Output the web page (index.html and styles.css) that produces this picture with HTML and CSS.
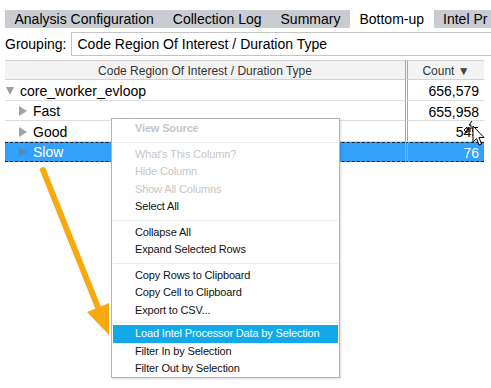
FILE: index.html
```html
<!DOCTYPE html>
<html lang="en">
<head>
    <meta charset="UTF-8">
    <title>Bottom-up</title>
    <link rel="stylesheet" href="styles.css">
</head>
<body>

    <div class="tabs">
        <div class="tab">Analysis Configuration</div>
        <div class="tab">Collection Log</div>
        <div class="tab">Summary</div>
        <div class="tab active">Bottom-up</div>
        <div class="tab">Intel Pr</div>
    </div>

    <div class="grouping">
        <span class="grouping-label">Grouping:</span>
        <div class="grouping-box">Code Region Of Interest / Duration Type</div>
    </div>

    <div class="grid">
        <div class="grid-row grid-header">
            <div class="cell cell-name">Code Region Of Interest / Duration Type</div>
            <div class="cell cell-count">Count <span class="sort">&#9660;</span></div>
        </div>
        <div class="grid-row">
            <div class="cell cell-name"><span class="tri tri-down"></span>core_worker_evloop</div>
            <div class="cell cell-count">656,579</div>
        </div>
        <div class="grid-row">
            <div class="cell cell-name level-1"><span class="tri tri-right"></span>Fast</div>
            <div class="cell cell-count">655,958</div>
        </div>
        <div class="grid-row">
            <div class="cell cell-name level-1"><span class="tri tri-right"></span>Good</div>
            <div class="cell cell-count">545</div>
        </div>
        <div class="grid-row selected">
            <div class="cell cell-name level-1"><span class="tri tri-right"></span>Slow</div>
            <div class="cell cell-count">76</div>
        </div>
    </div>

    <!-- context menu over the grid -->
    <div class="context-menu">
        <div class="menu-item disabled bold">View Source</div>
        <div class="menu-sep"></div>
        <div class="menu-item disabled">What's This Column?</div>
        <div class="menu-item disabled">Hide Column</div>
        <div class="menu-item disabled">Show All Columns</div>
        <div class="menu-item">Select All</div>
        <div class="menu-sep"></div>
        <div class="menu-item">Collapse All</div>
        <div class="menu-item">Expand Selected Rows</div>
        <div class="menu-sep"></div>
        <div class="menu-item">Copy Rows to Clipboard</div>
        <div class="menu-item">Copy Cell to Clipboard</div>
        <div class="menu-item">Export to CSV...</div>
        <div class="menu-sep tight"></div>
        <div class="menu-item highlighted">Load Intel Processor Data by Selection</div>
        <div class="menu-item">Filter In by Selection</div>
        <div class="menu-item">Filter Out by Selection</div>
    </div>

    <!-- annotation arrow -->
    <svg class="annotation" width="130" height="350" viewBox="0 0 130 350">
        <line x1="43" y1="170" x2="99" y2="310" stroke="#f7a90d" stroke-width="6" stroke-linecap="round"/>
        <polygon points="109,335 87,312 109,303" fill="#f7a90d"/>
    </svg>

    <!-- mouse pointer -->
    <svg class="pointer" width="24" height="34" viewBox="0 0 24 34">
        <path d="M8 1 L5 5 L7 5 L7 9 L3 9 L3 7 L0 10 L3 13 L3 11 L7 11" fill="none" stroke="#000" stroke-width="1"/>
        <path d="M11 9 L14 12 L11 15" fill="none" stroke="#000" stroke-width="1"/>
        <path d="M9 6 L9 22 L12.5 18.5 L15 25 L17.5 24 L15 17.5 L20 17.5 Z" fill="#fff" stroke="#000" stroke-width="1"/>
    </svg>

</body>
</html>
```

FILE: styles.css
```css
:root {
    --tab-grey: #c9cdd2;
    --line-grey: #d2d2d2;
    --row-line: #dedede;
    --select-blue: #33a0fc;
    --menu-blue: #12a9e8;
    --disabled: #c6c6c6;
}

* {
    margin: 0;
    padding: 0;
    box-sizing: border-box;
}

body {
    font-family: 'Liberation Sans', Arial, sans-serif;
    color: #000;
    background: #fff;
    width: 491px;
    height: 388px;
    overflow: hidden;
    position: relative;
}

/* Tabs */
.tabs {
    display: flex;
    margin: 10px 0 0 5px;
    height: 18px;
    white-space: nowrap;
}

.tab {
    padding: 0 9.5px;
    background-color: var(--tab-grey);
    font-size: 14px;
    line-height: 18px;
}

.tab:last-child {
    flex: 1;
}

.tab.active {
    background-color: #fff;
}

/* Grouping line */
.grouping {
    display: flex;
    align-items: center;
    margin-top: 4px;
    padding-left: 5px;
    gap: 5px;
}

.grouping-label {
    font-size: 14px;
}

.grouping-box {
    flex: 1;
    height: 24px;
    line-height: 22px;
    border: 1px solid #c4c4c4;
    border-right: none;
    padding-left: 5px;
    font-size: 14px;
}

/* Grid */
.grid {
    margin: 4px 0 0 5px;
    width: 479px;
}

.grid-row {
    display: flex;
    height: 20.5px;
}

.cell {
    height: 20.5px;
    line-height: 18px;
    padding-top: 2px;
    font-size: 14px;
    border-bottom: 1px solid var(--row-line);
    white-space: nowrap;
}

.cell-name {
    width: 400px;
    display: flex;
    align-items: center;
    padding-left: 1px;
}

.cell-name.level-1 {
    padding-left: 14px;
}

.cell-count {
    width: 79px;
    text-align: right;
    padding-right: 5px;
    border-left: 3px double #a8a8a8;
}

.grid-header,
.grid-header .cell {
    height: 20px;
}

.grid-header .cell {
    background-color: #f3f3f3;
    border-top: 1px solid var(--line-grey);
    border-bottom: 1px solid var(--line-grey);
    font-size: 12px;
    line-height: 18px;
    color: #333;
    justify-content: center;
    text-align: center;
    padding: 1px 0 0;
}

.sort {
    font-size: 12px;
    color: #444;
}

/* Tree triangles */
.tri {
    display: inline-block;
    width: 0;
    height: 0;
    margin-right: 6px;
}

.tri-down {
    border-left: 4.5px solid transparent;
    border-right: 4.5px solid transparent;
    border-top: 8px solid #9c9c9c;
}

.tri-right {
    border-top: 5px solid transparent;
    border-bottom: 5px solid transparent;
    border-left: 8px solid #a2a2a2;
}

/* Selected row */
.selected .cell {
    background-color: var(--select-blue);
    color: #fff;
    border-top: 1px dashed #1a1a1a;
    border-bottom: 1px dashed #1a1a1a;
    line-height: 18px;
    padding-top: 1px;
}

.selected .tri-right {
    border-left-color: #5b86b8;
}

/* Context menu */
.context-menu {
    position: absolute;
    left: 111px;
    top: 118px;
    width: 229px;
    height: 260px;
    background: #fff;
    border: 1px solid #b4b4b4;
    box-shadow: 1px 1px 2px rgba(0, 0, 0, 0.15);
    padding: 1px 1px 0 1px;
}

.menu-item {
    height: 17.5px;
    line-height: 17.5px;
    padding-left: 22px;
    font-size: 11px;
    letter-spacing: -0.15px;
    color: #111;
    white-space: nowrap;
}

.menu-item.disabled {
    color: var(--disabled);
}

.menu-item.bold {
    font-weight: bold;
}

.menu-item.highlighted {
    background-color: var(--menu-blue);
    color: #fff;
}

.menu-sep {
    height: 1px;
    background-color: #ececec;
    margin: 4px 0 3px;
}

.menu-sep.tight {
    margin: 3px 0 2px;
}

/* Overlays */
.annotation {
    position: absolute;
    left: 0;
    top: 0;
}

.pointer {
    position: absolute;
    left: 464px;
    top: 120px;
}
```
